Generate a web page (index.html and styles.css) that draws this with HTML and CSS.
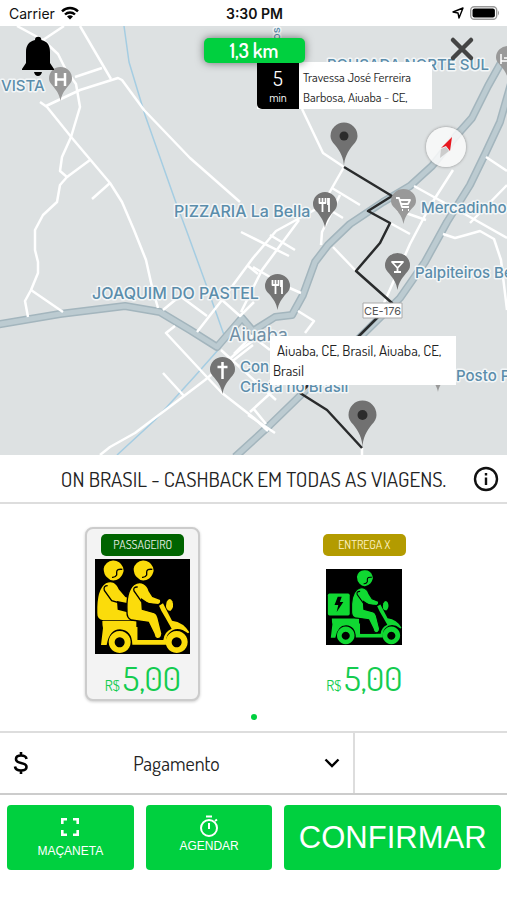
FILE: index.html
```html
<!DOCTYPE html>
<html lang="pt-BR">
<head>
    <meta charset="utf-8">
    <meta name="viewport" content="width=device-width, initial-scale=1">
    <title>On Brasil</title>
    <link rel="stylesheet" href="styles.css">
</head>

<body>

<header class="status">
    <div class="carrier">
        Carrier
        <svg width="18" height="14" viewBox="0 0 18 14" fill="none" stroke="#000" stroke-width="2.4"><path d="M1 5.3C5.500 .8 12.500 .8 17 5.300"/><path d="M4 8.500C6.800 5.800 11.200 5.800 14 8.500"/><path d="M9 13.500 6 10.500Q9 8 12 10.500Z" fill="#000" stroke="none"/></svg>
    </div>
    <div class="time">3:30 PM</div>
    <div class="power">
        <svg width="12" height="12" viewBox="0 0 12 12" fill="none" stroke="#000" stroke-width="1.4" stroke-linejoin="round"><path d="M11 1 7 11 6 6 1 5Z"/></svg>
        <svg width="30" height="14" viewBox="0 0 30 14"><rect x=".7" y=".7" width="26" height="12.600" rx="3.500" fill="#fff" stroke="#999" stroke-width="1.400"/><rect x="2.500" y="2.500" width="22.400" height="9" rx="2" fill="#000"/><path d="M28 4.500q2 2.500 0 5z" fill="#999"/></svg>
    </div>
</header>

<main class="map">
    <svg class="mapArt" viewBox="0 26 507 429" preserveAspectRatio="xMidYMid slice">
        <defs>
            <symbol id="pin" viewBox="0 0 24 36" preserveAspectRatio="none"><path d="M12 36C11 29 8 25 4 20C1 17 0 15 0 12A12 12 0 0 1 24 12C24 15 23 17 20 20C16 25 13 29 12 36Z"/></symbol>
            <symbol id="bigPin" viewBox="0 0 28 45" preserveAspectRatio="none"><path d="M14 45C14 36 10 29 5 23C2 20 .5 17 .5 14A13.500 13.500 0 0 1 27.500 14C27.500 17 26 20 23 23C18 29 14 36 14 45Z"/></symbol>
        </defs>

        <!-- streams -->
        <g class="stream">
            <path d="M124 26 129 62 145 115 175 200 187 232 207 287 224 335"/>
            <path d="M218 350 195 376 155 420 117 455"/>
        </g>

        <!-- highways -->
        <g class="highwayEdge">
            <path d="M-5 325 60 314 125 306 160 312 190 330 217 347 242 318 253 331 275 317 292 315 303 295 315 262 328 245 350 224 383 202 410 186 432 166 456 136 472 118 488 86 507 52"/>
            <path d="M512 80 500 122 486 152 470 185 447 222 425 262 400 298 350 347 305 391 270 425 235 457"/>
        </g>
        <g class="highway">
            <path d="M-5 325 60 314 125 306 160 312 190 330 217 347 242 318 253 331 275 317 292 315 303 295 315 262 328 245 350 224 383 202 410 186 432 166 456 136 472 118 488 86 507 52"/>
            <path d="M512 80 500 122 486 152 470 185 447 222 425 262 400 298 350 347 305 391 270 425 235 457"/>
        </g>

        <!-- streets -->
        <g class="street">
            <path d="M17 26 43 40 58 54 66 70 76 84 80 107 71 137 62 157 60 171 67 177 60 185 57 202 43 215 35 230 35 250 38 262 38 273 31 290 25 301 28 317"/>
            <path d="M43 40 64 26M80 26 111 79M75 77 102 68M67 177 90 160M110 183 92 199M31 290 63 312"/>
            <path d="M46 106 80 90 118 78 122 80 144 110 190 158 240 202"/>
            <path d="M40 102 47 107 72 138 110 183 122 202 134 230 146 260 152 287 158 308"/>
            <path d="M100 455 110 447 135 433 184 396 205 380 240 350 254 340"/>
            <path d="M175 326 166 333 205 375 222 393 254 418 268 431M163 373 184 396"/>
            <path d="M302 109 323 153 344 167 332 188 318 213"/>
            <path d="M163 310 180 296 207 316M197 332 222 300 253 258 276 231 318 208M222 300 240 316 254 302M241 232 289 256M253 267 270 277M299 220 262 270 241 312M270 235 295 250M247 265 258 274"/>
            <path d="M332 188 360 205M320 204 343 218M340 195 322 232 321 245M333 247 356 271M298 311 314 321 305 333M285 286 301 293"/>
            <path d="M414 186 470 217 507 238M453 170 430 206 410 244 384 303M486 157 507 171M507 185 470 223M397 210 426 220M390 223 410 234"/>
            <path d="M443 234 455 238 466 235 480 231 494 239 501 260 507 310"/>
            <path d="M221 350 276 400M234 354 252 336 270 350M230 363 253 345M250 412 276 388M248 415 275 433M253 408 266 424M362 448V455"/>
        </g>

        <!-- route -->
        <path class="route" d="M344 167 392 196 368 211 390 223 380 243 356 271 392 303 350 345 300 393 327 410 362 448"/>

        <!-- place names -->
        <g class="place">
            <text x="1" y="91">VISTA</text>
            <text class="shop" x="174" y="217">PIZZARIA La Bella</text>
            <text class="shop" x="92" y="299">JOAQUIM DO PASTEL</text>
            <text x="327" y="70">POUSADA NORTE SUL</text>
            <text x="421" y="213">Mercadinho</text>
            <text x="415" y="278">Palpiteiros Be</text>
            <text x="456" y="381">Posto P</text>
            <text x="240" y="372">Con</text>
            <text x="240" y="392">Cristã no Brasil</text>
            <text class="town" x="229" y="341">Aiuaba</text>
            <text class="small" transform="translate(280 40) rotate(-90)">os</text>
        </g>

        <!-- place pins -->
        <g class="pale">
            <use href="#pin" x="49" y="67" width="23" height="34"/>
            <use href="#pin" x="391" y="189" width="25" height="35"/>
            <use href="#pin" x="496" y="46" width="24" height="34"/>
            <use href="#pin" x="427" y="362" width="22" height="30"/>
        </g>
        <g class="dark">
            <use href="#pin" x="313" y="192" width="24" height="36"/>
            <use href="#pin" x="265" y="274" width="25" height="36"/>
            <use href="#pin" x="385" y="253" width="25" height="37"/>
            <use href="#pin" x="210" y="357" width="25" height="37"/>
        </g>
        <g class="trip">
            <use href="#bigPin" x="330" y="122" width="28" height="45"/>
            <use href="#bigPin" x="348" y="400" width="29" height="48"/>
            <circle cx="344" cy="136" r="4.500"/>
            <circle cx="362.500" cy="415" r="5"/>
        </g>
        <g class="glyph">
            <path d="M56 73V86M65 73V86M56 79.500H65"/>
            <path d="M222.500 362V379M217.500 367H227.500"/>
            <path d="M501 54V64M501 61H510M504 58H510" stroke-width="1.500"/>
            <path d="M396 198H399L402 207H409M399 200H410L408 204H401M402 210H403M408 210H409" stroke-width="1.800"/>
            <path d="M392 262H403L397.500 268ZM397.500 267V272M394 272H401" stroke-width="1.800"/>
            <path id="fork" d="M319.500 198V203H325.500V198M322.500 198V212M329 198V212M328 198V205" stroke-width="1.800"/>
            <use href="#fork" x="-47" y="82"/>
        </g>

        <!-- road number -->
        <rect class="shield" x="363" y="303" width="39" height="15"/>
        <text class="shieldText" x="382.500" y="315">CE-176</text>
    </svg>

    <button class="iconBtn bell" aria-label="Notificações">
        <svg width="34" height="40" viewBox="0 0 34 40"><path d="M14 4a3.200 3.200 0 0 1 6.400 0C27 5.500 29 10 29 16V27L33 33V34H1V33L5 27V16C5 10 7.500 5.500 14 4ZM13 36H21Q20 40 17 40Q14 40 13 36Z"/></svg>
    </button>
    <button class="iconBtn close" aria-label="Fechar">
        <svg width="26" height="26" viewBox="0 0 26 26" stroke="#444" stroke-width="4.500" stroke-linecap="round"><path d="M4 4 22 22M22 4 4 22"/></svg>
    </button>
    <button class="compass" aria-label="Bússola">
        <svg width="40" height="40" viewBox="0 0 40 40"><path d="M26 10 15 21 20 19 24 24Z" fill="#e8171f"/><path d="M15 22 20 20 23 24 14 31Z" fill="#ccc"/></svg>
    </button>

    <div class="distance">1,3 km</div>
    <div class="origin">
        <div class="eta"><b>5</b>min</div>
        <p>Travessa José Ferreira Barbosa, Aiuaba - CE,</p>
    </div>
    <p class="destination">Aiuaba, CE, Brasil, Aiuaba, CE, Brasil</p>
</main>

<section class="promo">
    <h1>ON BRASIL - CASHBACK EM TODAS AS VIAGENS.</h1>
    <button class="iconBtn" aria-label="Informações">
        <svg width="26" height="26" viewBox="0 0 26 26" fill="none" stroke="#111" stroke-width="2.400"><circle cx="13" cy="13" r="11"/><path d="M13 11.500V19M13 7V9.500"/></svg>
    </button>
</section>

<section class="rides">
    <button class="ride selected" aria-pressed="true">
        <span class="tag">PASSAGEIRO</span>
        <span class="pic">
            <svg viewBox="0 0 285 285" fill="#fbdc0b">
                <rect width="285" height="285" fill="#000"/>
                <path id="wheels" fill-rule="evenodd" d="M74 216a33 33 0 1 0 .1 0ZM74 235a15 15 0 1 1-.1 0ZM245 216a33 33 0 1 0 .1 0ZM245 235a15 15 0 1 1-.1 0Z"/>
                <g id="frame">
                    <path d="M22 186H124V204H128V243H205Q207 219 230 209L210 174Q198 155 192 140L204 133L231 185Q266 190 283 220L279 223Q246 198 222 222Q212 231 213 257H112Q111 213 75 211Q43 211 35 258H18L24 207Q22 200 22 186Z"/>
                    <path d="M215 128Q224 112 232 127Q239 145 226 156Q208 154 215 128Z"/>
                    <path d="M128 204H182L187 243H128Z" fill="#000"/>
                </g>
                <path d="M33 73C52 63 66 76 71 91L91 114L108 120V134L66 126L68 152L103 161Q113 168 110 184H25Q6 181 7 162Q5 90 33 73Z"/>
                <path d="M26 29A30 30 0 0 1 84 25L86 35C82 52 73 61 59 64Q45 66 36 55Q26 45 26 29Z"/>
                <path d="M82 31Q65 29 65 39V48Q61 56 51 55M38 80Q24 80 28 94L50 125L96 138" fill="none" stroke="#000" stroke-width="4"/>
                <g id="driver">
                    <path d="M116 77C139 61 158 78 162 95L173 112L196 121Q201 132 190 137L159 134L140 121L142 151L178 161Q186 164 189 176L201 224Q199 241 186 239Q179 237 177 225L160 190L109 183Q95 177 96 158Q93 97 116 77Z" stroke="#000" stroke-width="4"/>
                    <path d="M116 29A30 30 0 0 1 174 25L176 35C172 52 163 61 149 64Q135 66 126 55Q116 45 116 29Z"/>
                    <path d="M128 84Q113 83 117 96L139 127L173 137H190" fill="none" stroke="#000" stroke-width="4"/>
                    <path d="M172 31Q155 29 155 39V48Q151 56 141 55" fill="none" stroke="#000" stroke-width="4"/>
                </g>
            </svg>
        </span>
        <span class="price"><small>R$</small>5,00</span>
    </button>
    <button class="ride delivery" aria-pressed="false">
        <span class="tag">ENTREGA X</span>
        <span class="pic">
            <svg viewBox="0 0 285 285" fill="#10d832">
                <rect width="285" height="285" fill="#000"/>
                <use href="#wheels"/>
                <use href="#frame"/>
                <use href="#driver"/>
                <rect x="7" y="92" width="82" height="82" rx="6"/>
                <path d="M44 104H59L52 124H65L40 161L46 135H32Z" fill="#000"/>
            </svg>
        </span>
        <span class="price"><small>R$</small>5,00</span>
    </button>
    <i class="dot"></i>
</section>

<section class="payment">
    <div class="method">
        <label for="pay" aria-label="Forma de pagamento">
            <svg width="16" height="24" viewBox="0 0 16 24" fill="none" stroke="#000" stroke-width="2.600"><path d="M13.500 8Q13 4.500 8 4.500Q3 4.500 3 8Q3 11 8 12Q13.500 13 13.500 16Q13.500 19.500 8 19.500Q2.500 19.500 2 15.500M8 1V5M8 19V23"/></svg>
        </label>
        <select id="pay">
            <option>Pagamento</option>
        </select>
        <svg class="arrow" width="16" height="10" viewBox="0 0 16 10" fill="none" stroke="#000" stroke-width="2.400"><path d="M1.500 1.500 8 8 14.500 1.500"/></svg>
    </div>
    <div class="coupon"></div>
</section>

<footer class="actions">
    <button>
        <svg width="18" height="18" viewBox="0 0 18 18" fill="none" stroke="#fff" stroke-width="2.600"><path d="M1.300 6V1.300H6M12 1.300H16.700V6M16.700 12V16.700H12M6 16.700H1.300V12"/></svg>
        MAÇANETA
    </button>
    <button class="schedule">
        <svg width="20" height="22" viewBox="0 0 20 22" fill="none" stroke="#fff" stroke-width="2"><circle cx="10" cy="13" r="8"/><path d="M7 1.500H13M10 8V14M16 6 18 4.500"/></svg>
        AGENDAR
    </button>
    <button class="confirm">CONFIRMAR</button>
</footer>

</body>
</html>
```

FILE: styles.css
```css
*{
    box-sizing: border-box;
}
body{
    margin: 0;
    min-height: 100vh;
    display: flex;
    flex-direction: column;
    background: #fff;
    color: #222;
    font-family: Dosis, "Roboto Condensed", Lato, sans-serif;
}
button, select{
    font: inherit;
    color: inherit;
    border: 0;
    background: none;
    padding: 0;
}
svg{
    display: block;
}
p, h1{
    margin: 0;
    font-weight: normal;
}

/* status bar */
.status{
    display: grid;
    grid-template-columns: 1fr auto 1fr;
    align-items: center;
    height: 26px;
    padding: 0 7px 0 9px;
    font-family: Inter, sans-serif;
    font-size: 14px;
    color: #111;
}
.carrier, .power{
    display: flex;
    align-items: center;
    gap: 6px;
}
.power{
    justify-content: flex-end;
}
.time{
    font-weight: 600;
}

/* map */
.map{
    position: relative;
    flex: 1;
    min-height: 320px;
    overflow: hidden;
    background: #dde1e2;
}
.mapArt{
    position: absolute;
    width: 100%;
    height: 100%;
    fill: none;
    stroke-linejoin: round;
}
.stream{
    stroke: #a5cde2;
    stroke-width: 1.5;
}
.highwayEdge{
    stroke: #a3b5bd;
    stroke-width: 8;
}
.highway{
    stroke: #bccbd1;
    stroke-width: 5;
}
.street{
    stroke: #fff;
    stroke-width: 2.5;
}
.route{
    stroke: #292b2c;
    stroke-width: 2.5;
}
.place{
    fill: #5b8dab;
    stroke: #f3f6f7;
    stroke-width: 3;
    paint-order: stroke;
    font-family: Inter, sans-serif;
    font-size: 15px;
    font-weight: 500;
}
.place .shop{
    font-size: 16px;
}
.place .town{
    font-size: 18px;
    font-weight: 400;
    fill: #708fa5;
}
.place .small{
    font-size: 11px;
}
.pale{
    fill: #999;
}
.dark{
    fill: #747474;
}
.trip{
    fill: #717171;
}
.trip circle{
    fill: #2c2c2c;
}
.glyph{
    stroke: #fff;
    stroke-width: 2.5;
}
.shield{
    fill: #fff;
    stroke: #aaa;
}
.shieldText{
    fill: #555;
    text-anchor: middle;
    font-family: Inter, sans-serif;
    font-size: 11px;
}
.iconBtn{
    flex: none;
}
.bell{
    position: absolute;
    left: 21px;
    top: 10px;
}
.close{
    position: absolute;
    right: 32px;
    top: 10px;
}
.compass{
    position: absolute;
    right: 41px;
    top: 101px;
    border-radius: 50%;
    background: rgba(250, 250, 250, .85);
    box-shadow: 0 0 3px #888;
}
.distance{
    position: absolute;
    z-index: 1;
    left: 50%;
    top: 12px;
    width: 101px;
    margin-left: -50px;
    border-radius: 5px;
    background: #00d03f;
    box-shadow: 0 0 8px rgba(0, 0, 0, .5);
    color: #fff;
    font-size: 20px;
    font-weight: 600;
    line-height: 25px;
    text-align: center;
}
.origin{
    position: absolute;
    left: 257px;
    top: 36px;
    display: flex;
    width: 175px;
    background: #fff;
    font-size: 13px;
    line-height: 20px;
}
.origin p{
    padding: 5px 4px 2px;
}
.eta{
    flex: none;
    width: 42px;
    padding-top: 6px;
    border-radius: 0 0 0 5px;
    background: #000;
    color: #fff;
    font-size: 12px;
    text-align: center;
}
.eta b{
    display: block;
    font-size: 20px;
    font-weight: normal;
}
.destination{
    position: absolute;
    left: 270px;
    top: 310px;
    width: 186px;
    padding: 5px 3px 4px;
    background: #fff;
    font-size: 15px;
    line-height: 20px;
    text-indent: 4px;
}

/* promo line */
.promo{
    display: flex;
    align-items: center;
    height: 49px;
    padding: 0 8px 0 34px;
    border-bottom: 2px solid #ddd;
}
.promo h1{
    flex: 1;
    font-size: 21px;
    text-align: center;
}

/* ride options */
.rides{
    display: grid;
    grid-template-columns: 1fr 1fr;
    justify-items: center;
    padding: 23px 32px 11px;
}
.ride{
    display: flex;
    flex-direction: column;
    align-items: center;
    width: 115px;
    height: 174px;
    padding-top: 5px;
    border: 2px solid transparent;
    border-radius: 8px;
}
.selected{
    border-color: #ccc;
    background: #f3f3f3;
    box-shadow: 0 1px 3px rgba(0, 0, 0, .2);
}
.tag{
    width: 83px;
    border-radius: 5px;
    background: #006400;
    color: #e6efe6;
    font-size: 12px;
    line-height: 22px;
}
.delivery .tag{
    background: #b39b00;
    color: #fff3c4;
}
.pic{
    display: flex;
    flex: none;
    align-items: center;
    height: 95px;
    margin-top: 3px;
}
.pic svg{
    width: 95px;
}
.delivery .pic svg{
    width: 76px;
}
.price{
    margin-top: 4px;
    color: #14cc50;
    font-size: 34px;
    line-height: 40px;
}
.price small{
    margin-right: 3px;
    font-size: 15px;
}
.dot{
    grid-column: 1 / 3;
    width: 6px;
    height: 6px;
    margin-top: 13px;
    border-radius: 50%;
    background: #00d03f;
}

/* payment */
.payment{
    display: grid;
    grid-template-columns: 7fr 3fr;
    height: 64px;
    border-top: 2px solid #ddd;
    border-bottom: 2px solid #ccc;
}
.method{
    display: flex;
    align-items: center;
    padding: 0 13px;
    border-right: 2px solid #ddd;
}
.method select{
    flex: 1;
    appearance: none;
    font-size: 20px;
    text-align: center;
    text-align-last: center;
}

/* bottom buttons */
.actions{
    display: grid;
    grid-template-columns: 127fr 127fr 217fr;
    gap: 12px;
    padding: 10px 6px 30px 7px;
    font-family: "Liberation Sans", sans-serif;
    font-size: 12px;
}
.actions button{
    display: flex;
    flex-direction: column;
    align-items: center;
    justify-content: center;
    gap: 8px;
    height: 65px;
    border-radius: 4px;
    background: #00d03f;
    color: #fff;
}
.actions .schedule{
    justify-content: flex-start;
    gap: 2px;
    padding-top: 10px;
}
.actions .confirm{
    font-size: 31px;
}
```
